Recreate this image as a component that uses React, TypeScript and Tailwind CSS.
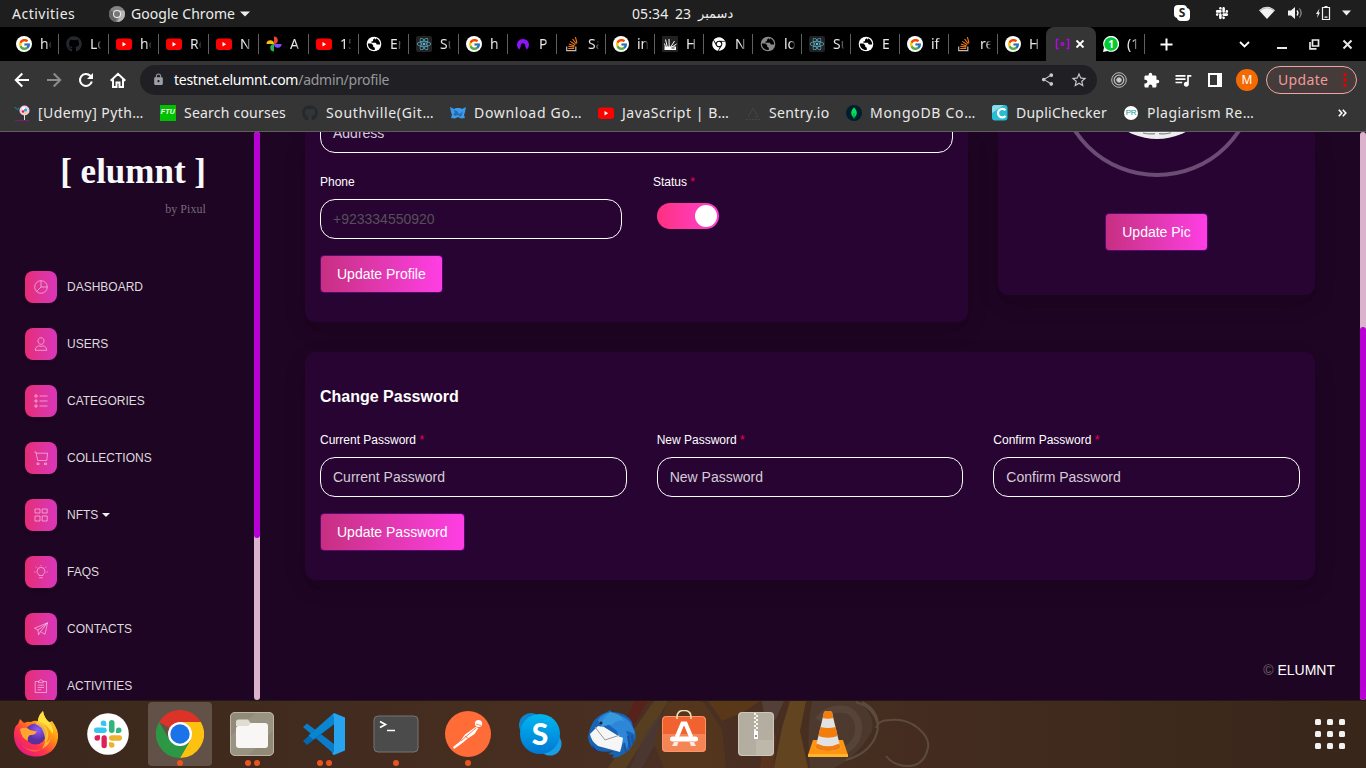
import React from "react";
import type { ReactNode } from "react";
import { FcGoogle } from "react-icons/fc";
import { FaGithub, FaReact, FaChrome, FaSlack } from "react-icons/fa";
import { MdLock, MdShare, MdStarBorder, MdExtension, MdQueueMusic } from "react-icons/md";

/* ---------- small favicons ---------- */

const Google = () => (
  <span className="flex size-4 items-center justify-center rounded-full bg-white"><FcGoogle size={13} /></span>
);
const Youtube = () => (
  <svg width="16" height="16" viewBox="0 0 16 16"><rect y="2.500" width="16" height="11.500" rx="3" fill="#f00" /><path d="M6.500 6v4.400L10.200 8.200z" fill="#fff" /></svg>
);
const Github = () => <FaGithub size={16} className="text-[#24292f]" />;
const Photos = () => (
  <svg width="16" height="16" viewBox="0 0 16 16">
    <path d="M8 .5a3.750 3.750 0 0 1 0 7.500z" fill="#ea4335" />
    <path d="M15.500 8a3.750 3.750 0 0 1-7.500 0z" fill="#7b4dff" />
    <path d="M8 15.500a3.750 3.750 0 0 1 0-7.500z" fill="#25b34b" />
    <path d="M.5 8A3.750 3.750 0 0 1 8 8z" fill="#fbbc04" />
  </svg>
);
const GlobeShape = ({ color }: { color: string }) => (
  <svg width="16" height="16" viewBox="0 0 16 16">
    <circle cx="8" cy="8" r="7.300" fill={color} />
    <path d="M1.800 7.500h3.700l1.700 1.700v1.600l1.600 1V14C5 14.300 2 12 1.800 7.500zM8.500 2.200 7 3.800v1.400H5.500v1.600h4.300l1 1.700h3.400Q14 4 10 2.200l-.3 1.500z" fill="#000" />
  </svg>
);
const Globe = () => <GlobeShape color="#fff" />;
const GlobeDim = () => <GlobeShape color="#8a8a8a" />;
const ReactFav = () => (
  <span className="flex size-4 items-center justify-center rounded-[2px] bg-[#222]"><FaReact size={14} className="text-[#61bedb]" /></span>
);
const Overflow = () => (
  <svg width="16" height="16" viewBox="0 0 16 16" fill="none">
    <path d="M2.700 10.500v4.200h9.100v-4.200" stroke="#bcbbbb" strokeWidth="1.200" />
    <path d="M4.200 12.500h6M4.300 10.300l6 .8M4.900 7.900l5.700 2M6.300 5.400l5 3.400M8.500 3l4 4.800M11.400 1.200l1.600 5.600" stroke="#f47a16" strokeWidth="1.100" />
  </svg>
);
const Arch = () => (
  <svg width="16" height="16" viewBox="0 0 16 16"><path d="M4.300 13.600A6 6 0 1 1 11.700 13.600L10.200 10.300a2.300 2.300 0 1 0-4.400 0z" fill="#9013fe" /></svg>
);
const Hand = () => (
  <svg width="16" height="16" viewBox="0 0 16 16" fill="none">
    <rect width="16" height="16" rx="1" fill="#222" />
    <path d="M2.500 10.500h11.500V14H2.500z" fill="#fff" /><path d="M3.500 11 2.500 7.500M5.300 11 3.500 3.500M7.200 11l-.2-8M8.700 11 12.500 5M10 11l4.500-3" stroke="#fff" strokeWidth="1" />
    <path d="M9.500 12h3" stroke="#222" />
  </svg>
);
const ChromeFav = () => <FaChrome size={14} className="text-white" />;

type Tab = { icon: () => React.JSX.Element; title: string };
const tabs: Tab[] = [
  { icon: Google, title: "ho" }, { icon: Github, title: "Lo" }, { icon: Youtube, title: "ho" },
  { icon: Youtube, title: "Re" }, { icon: Youtube, title: "N" }, { icon: Photos, title: "A" },
  { icon: Youtube, title: "15" }, { icon: Globe, title: "Er" }, { icon: ReactFav, title: "Su" },
  { icon: Google, title: "h" }, { icon: Arch, title: "P" }, { icon: Overflow, title: "Sa" },
  { icon: Google, title: "in" }, { icon: Hand, title: "H" }, { icon: ChromeFav, title: "N" },
  { icon: GlobeDim, title: "lo" }, { icon: ReactFav, title: "Su" }, { icon: Globe, title: "E" },
  { icon: Google, title: "if" }, { icon: Overflow, title: "re" }, { icon: Google, title: "H" },
];

function TabTitle({ children }: { children: ReactNode }) {
  return (
    <span className="w-[11px] overflow-hidden whitespace-nowrap text-[14px] leading-5 text-[#e8e8e8] [mask-image:linear-gradient(90deg,#000_55%,transparent_105%)]">
      {children}
    </span>
  );
}

function TopBar() {
  return (
    <div className="flex h-[27px] items-center bg-[#1e1e1e] text-[14px] text-[#ececec]">
      <span className="w-[109px] pl-3 tracking-[0.5px]">Activities</span>
      <svg width="16" height="16" viewBox="0 0 16 16" className="mr-1.5">
        <circle cx="8" cy="8" r="8" fill="#858585" /><path d="M8 8 1 4A8 8 0 0 0 7 16z" fill="#666" />
        <path d="M8 4.500h7.200A8 8 0 0 1 8 16l3-6z" fill="#b5b5b5" /><circle cx="8" cy="8" r="4" fill="#eee" /><circle cx="8" cy="8" r="3" fill="#777" />
      </svg>
      <span className="w-[109px] tracking-[0.05px]">Google Chrome</span>
      <svg width="10" height="6" viewBox="0 0 10 6"><path d="M0 .5h10L5 5.500z" fill="#eee" /></svg>
      <span className="ml-[382px] w-[43px] tracking-[0.1px]" dir="ltr">05:34</span>
      <span className="w-[22px]">23</span>
      <span className="w-[440px] pl-px font-['DejaVu_Sans',sans-serif] text-[13px]">دسمبر</span>
      <div className="flex flex-1 items-center">
        <svg width="16" height="16" viewBox="0 0 16 16" className="ml-[37px] -mt-px">
          <rect width="13" height="13" rx="4" fill="#fff" /><rect x="3" y="3" width="13" height="13" rx="4" fill="#fff" /><circle cx="8" cy="8" r="7" fill="#fff" />
          <text x="8" y="12.300" textAnchor="middle" fontSize="12" fontWeight="700" fill="#1e1e1e">S</text>
        </svg>
        <FaSlack size={14} className="ml-[25px] -mt-px text-white" />
        <svg width="16" height="14" viewBox="0 0 16 14" className="ml-[30px] -mt-px"><path d="M0 4.200Q8-2.600 16 4.200L8 13z" fill="#f2f2f2" /><path d="M1 4.600Q8-1 15 4.600" fill="none" stroke="#999" strokeWidth=".7" /></svg>
        <svg width="15" height="14" viewBox="0 0 15 14" className="ml-[13px] -mt-px" fill="none" stroke="#f2f2f2">
          <path d="M0 4.500h3L7 1v12L3 9.500H0z" fill="#f2f2f2" stroke="none" /><path d="M9 4.500q2 2.500 0 5" strokeWidth="1.300" /><path d="M11.500 2.500q3.300 4.500 0 9" stroke="#aaa" />
        </svg>
        <svg width="15" height="16" viewBox="0 0 15 16" className="ml-[13px] -mt-px" fill="none" stroke="#f2f2f2"><path d="M3.500 3.500 0 9h1.800L1 13l3-5.500H2.500z" fill="#f2f2f2" stroke="none" /><path d="M6.500 2.500h7v12h-7zM8.500 1.500h3M8.500 12.200h3" strokeWidth="1.200" /></svg>
        <svg width="10" height="6" viewBox="0 0 10 6" className="ml-[11px] -mt-px"><path d="M0 .5h9L4.500 5.500z" fill="#eee" /></svg>
      </div>
    </div>
  );
}

function TabStrip() {
  return (
    <div className="flex h-[34px] items-center bg-black pl-[9px]">
      {tabs.map((t, i) => (
        <div key={i} className={`relative flex h-full shrink-0 items-center pl-[7px] ${i < 9 ? "w-[50px]" : "w-[49px]"}`}>
          <span className="mr-2 flex size-4 items-center justify-center"><t.icon /></span>
          <TabTitle>{t.title}</TabTitle>
          {i < 20 && <span className="absolute right-0 top-[7px] h-5 w-px bg-[#5f6062]" />}
        </div>
      ))}
      <div className="-ml-px flex h-full w-[50px] items-center rounded-t-lg bg-[#353535] pl-[9px]">
        <svg width="15" height="12" viewBox="0 0 15 12" fill="none" stroke="#b108df" strokeWidth="1.500"><path d="M3.500 1.500H1.500v9h2M11.500 1.500h2v9h-2" /><circle cx="7.500" cy="6" r="1.300" /></svg>
        <svg width="10" height="10" viewBox="0 0 10 10" className="ml-[5px]" stroke="#fff" strokeWidth="1.800"><path d="m1.500 1.500 7 7M8.500 1.500l-7 7" /></svg>
      </div>
      <div className="flex h-full w-[49px] items-center pl-[7px]">
        <svg width="16" height="16" viewBox="0 0 16 16" className="mr-2"><path d="M0 16 1 11.500A8 8 0 1 1 4.500 15z" fill="#fff" /><circle cx="8" cy="8" r="6.800" fill="#0c3" /><text x="8" y="11.700" textAnchor="middle" fontSize="10" fontWeight="700" fill="#fff">1</text></svg>
        <TabTitle>(1</TabTitle>
        <span className="ml-[6px] h-5 w-px bg-[#5f6062]" />
      </div>
      <svg width="13" height="13" viewBox="0 0 13 13" className="ml-[15px]" stroke="#fff" strokeWidth="2"><path d="M6.500.5v12M.5 6.500h12" /></svg>
      <svg width="11" height="7" viewBox="0 0 11 7" className="ml-[66px]" fill="none" stroke="#fff" strokeWidth="1.800"><path d="m1 1 4.500 4.500L10 1" /></svg>
      <svg width="10" height="14" viewBox="0 0 10 14" className="ml-[27px]"><path d="M0 10h10v2H0z" fill="#e8e8e8" /></svg>
      <svg width="11" height="11" viewBox="0 0 11 11" className="ml-[22px]" fill="none" stroke="#e8e8e8" strokeWidth="1.700"><path d="M3.500 1h6v6h-6zM1 3v6.800h6.500" /></svg>
      <svg width="11" height="11" viewBox="0 0 11 11" className="ml-[22px]" stroke="#e8e8e8" strokeWidth="2"><path d="m1.500 1.500 8 8M9.500 1.500l-8 8" /></svg>
    </div>
  );
}

function Toolbar() {
  return (
    <div className="flex h-[38px] items-center bg-[#353535] pl-[14px] text-white">
      <svg width="16" height="16" viewBox="0 0 16 16" fill="none" stroke="#fff" strokeWidth="2"><path d="M15 8H2M8.300 1.500 1.800 8l6.500 6.500" /></svg>
      <svg width="16" height="16" viewBox="0 0 16 16" className="ml-4" fill="none" stroke="#8c8c8c" strokeWidth="2"><path d="M1 8h13M7.700 1.500 14.200 8l-6.500 6.500" /></svg>
      <svg width="16" height="16" viewBox="0 0 16 16" className="ml-4" fill="none"><path d="M13.800 9.500A6 6 0 1 1 12.300 3.800l1.200 1.200" stroke="#fff" strokeWidth="2.100" /><path d="M15 1v6H9z" fill="#fff" /></svg>
      <svg width="16" height="16" viewBox="0 0 16 16" className="ml-[16px] mr-[2px]" fill="none" stroke="#fff" strokeWidth="2"><path d="M.7 8.700 8 1.800l7.300 6.900M3 7.500V15h3.500v-4.500h3V15H13V7.500" /></svg>
      <div className="ml-[12px] flex h-[30px] w-[957px] items-center rounded-full bg-[#202024] pb-px pl-3 text-[14px]">
        <MdLock size={13} className="mr-[9px] text-[#9aa0a6]" />
        <span className="tracking-[-0.27px]">testnet.elumnt.com<span className="text-[#96989b]">/admin/profile</span></span>
        <MdShare size={15} className="ml-auto text-[#c8c8c8]" /><MdStarBorder size={18} className="ml-[15px] mr-[9px] text-[#c8c8c8]" />
      </div>
      <svg width="16" height="16" viewBox="0 0 16 16" className="ml-[14px]" fill="none" stroke="#bdbdbd"><circle cx="8" cy="8" r="7.300" /><circle cx="8" cy="8" r="4.800" strokeWidth="1.300" /><circle cx="8" cy="8" r="2.300" fill="#ccc" /></svg>
      <MdExtension size={17} className="ml-[16px]" />
      <MdQueueMusic size={20} className="ml-[13px]" />
      <svg width="14" height="14" viewBox="0 0 14 14" className="ml-[15px]"><path d="M0 0h14v14H0z" fill="#fff" /><path d="M2 2h7v10H2z" fill="#353535" /></svg>
      <span className="ml-[14px] flex size-[22px] items-center justify-center rounded-full bg-[#f56a00] text-[12px]">M</span>
      <div className="ml-2 flex h-7 w-[91px] items-center rounded-full border border-[#f0a6a0] bg-[#453b3b] pb-px pl-[11px] text-[14px] tracking-[0.35px] text-[#ee9d98]">
        Update
        <svg width="4" height="14" viewBox="0 0 4 14" className="ml-[15px] mt-px shrink-0" fill="#e60000"><circle cx="2" cy="2" r="1.700" /><circle cx="2" cy="7" r="1.700" /><circle cx="2" cy="12" r="1.700" /></svg>
      </div>
    </div>
  );
}

const Udemy = () => (
  <svg width="16" height="16" viewBox="0 0 16 16"><path d="M0 2h2l1 2 2-2v2.500L3 5z" fill="#15797f" /><circle cx="10.500" cy="5.500" r="5" fill="#f6c8ec" /><path d="M8 2h3v3H8z" fill="#fff" /><circle cx="11.500" cy="5" r="1.600" fill="#12b8c9" /><circle cx="9" cy="6.500" r="1.300" fill="#d7263d" /><circle cx="11.500" cy="8" r="1.100" fill="#f9d423" /><path d="M10 10h1v5h-1z" fill="#ddd" /><path d="M1 15h14v.8H1z" fill="#8b1a7d" /></svg>
);
const Ftu = () => <span className="flex size-4 items-center justify-center bg-[#00c000] font-['Liberation_Sans',sans-serif] text-[7px] font-bold italic text-white">FTU</span>;
const Fox = () => <svg width="16" height="16" viewBox="0 0 16 16"><path d="M0 2l4 2 2-1h4l2 1 4-2-1 5-1 3 1 3-4 .5L8 12l-3 1.500L1 13l1-3-1-3z" fill="#3a9bf0" /><path d="M4 5l3 1 2 3 2-1 2-2-2 6-3-2-3 1-2-2 2-1z" fill="#1b4a80" opacity=".6" /></svg>;
const Sentry = () => <svg width="16" height="16" viewBox="0 0 16 16" fill="none" stroke="#444"><path d="M5 9 8 3l5 9h-3M3 12l2.500-4" /><path d="M1 14.500h14" strokeDasharray="2 1" /></svg>;
const Mongo = () => <svg width="16" height="16" viewBox="0 0 16 16"><circle cx="8" cy="8" r="8" fill="#001e2b" /><path d="M8 2.500c3.700 3.500 3.700 7.500 0 10.500-3.700-3-3.700-7 0-10.500z" fill="#00e05a" /><path d="M8 8v6" stroke="#0a8f43" strokeWidth=".9" /></svg>;
const Dupli = () => <svg width="16" height="16" viewBox="0 0 16 16"><rect width="15.500" height="15.500" rx="3" fill="#29bcd6" /><path d="M0 8V3a3 3 0 0 1 3-3h9z" fill="#85dcea" /><path d="M13.500 5.200A4.300 4.300 0 1 0 13.500 11" fill="none" stroke="#fff" strokeWidth="2.200" /></svg>;
const Plag = () => <span className="flex size-[14px] items-center justify-center rounded-full bg-white font-['Liberation_Sans',sans-serif] text-[8px] tracking-[-0.3px] text-[#159a8e]">PR</span>;

const bookmarks: { icon: () => React.JSX.Element; label: string; cls: string }[] = [
  { icon: Udemy, label: "[Udemy] Pyth…", cls: "w-[146px] tracking-[0.43px]" },
  { icon: Ftu, label: "Search courses", cls: "w-[142px] tracking-[0.22px]" },
  { icon: Github, label: "Southville(Git…", cls: "w-[148px] tracking-[0.65px]" },
  { icon: Fox, label: "Download Go…", cls: "w-[148px] tracking-[0.7px]" },
  { icon: Youtube, label: "JavaScript | B…", cls: "w-[147px] tracking-[0.55px]" },
  { icon: Sentry, label: "Sentry.io", cls: "w-[101px] tracking-[0.35px]" },
  { icon: Mongo, label: "MongoDB Co…", cls: "w-[146px] tracking-[0.7px]" },
  { icon: Dupli, label: "DupliChecker", cls: "w-[131px] tracking-[0.25px]" },
  { icon: Plag, label: "Plagiarism Re…", cls: "w-[215px] tracking-[0.48px]" },
];

function Bookmarks() {
  return (
    <div className="flex h-[33px] items-center border-b border-[#5e5e5e] bg-[#353535] pb-[5px] pl-[14px] text-[14px] text-[#e9e9e9]">
      {bookmarks.map((b) => (
        <div key={b.label} className={`flex shrink-0 items-center gap-2 whitespace-nowrap ${b.cls}`}>
          <span className="flex size-4 shrink-0 items-center justify-center">
            <b.icon />
          </span>
          <span className="-mt-px">{b.label}</span>
        </div>
      ))}
      <svg width="9" height="8" viewBox="0 0 9 8" fill="none" stroke="#fff" strokeWidth="1.600"><path d="m.8.8 3 3.200-3 3.200M4.800.8l3 3.200-3 3.200" /></svg>
    </div>
  );
}

/* ---------- page ---------- */

const menu: { label: string; path: string; caret?: boolean }[] = [
  { label: "DASHBOARD", path: "M7 .7a6.300 6.300 0 1 0 0 12.600A6.300 6.300 0 0 0 7 .7zM7 .7V7h6.300M7 7l-4.500 4.500" },
  { label: "USERS", path: "M7 .7c-4 0-4 6.600 0 6.600s4-6.600 0-6.600zM1.300 13.300c0-2.500 1.500-4 3.500-4.500L7 9.500l2.200-.7c2 .5 3.500 2 3.500 4.500z" },
  { label: "CATEGORIES", path: "M1 1h2v2H1zM1 6h2v2H1zM1 11h2v2H1zM5.500 2h8M5.500 7h8M5.500 12h8" },
  { label: "COLLECTIONS", path: "M.3 1h1.700l1.700 8.500h9l1-7.300H2.300M3 12h2v1.700H3zM10.500 12h2v1.700h-2z" },
  { label: "NFTS", path: "M1 1h5v4H1zM8.200 1h5v4h-5zM1 8h5v5H1zM8.200 8h5v5h-5z", caret: true },
  { label: "FAQS", path: "M5 10.500c0-1.500-2-2-2-4.200a4 4 0 0 1 8 0c0 2.200-2 2.700-2 4.200zM5.200 12.800h3.600M7 1V0M2.600 2.600l-.9-.9M11.400 2.600l.9-.9M.2 7h1.200M12.600 7h1.200" },
  { label: "CONTACTS", path: "M13.500.8.500 6.200l3.500 1.800.5 4.800 2-3.200 4.500 2.700zM4 8l9.500-7.200L6.500 9.600" },
  { label: "ACTIVITIES", path: "M4.500 2.500H1.200v11h11.300v-11H9.200M4.500 3.700V2L5.800 1.700c.5-1.500 1.700-1.500 2.200 0L9.200 2v1.700zM3.700 6.200H10M3.700 8.500H10M3.700 10.800h3.500" },
];

function Sidebar() {
  return (
    <aside className="flex h-full w-[254px] shrink-0 flex-col overflow-hidden">
      <div className="flex h-[139px] w-[206px] shrink-0 flex-col items-end pt-[19px] font-['Liberation_Serif',serif]">
        <span className="whitespace-pre text-[35px] font-bold leading-[42px] text-[#f8f9fa]">[ elumnt ]</span>
        <span className="mt-[7px] text-[12px] leading-[18px] tracking-[0.06px] text-[#77697a]">by Pixul</span>
      </div>
      <nav className="flex flex-col gap-[25px] pl-[25px]">
        {menu.map((m) => (
          <div key={m.label} className="flex h-8 shrink-0 items-center gap-[10px] text-[12px] text-[#dedade]">
            <span className="flex size-8 items-center justify-center rounded-lg bg-linear-to-r from-[#e62b76] to-[#da35ba] shadow-[0_2px_4px_rgba(0,0,0,0.15)]">
              <svg width="14" height="14" viewBox="0 0 14 14" fill="none" stroke="#fff" strokeOpacity=".55" strokeWidth=".9"><path d={m.path} /></svg>
            </span>
            <span className="flex items-center gap-1">{m.label}
              {m.caret && <svg width="8" height="4" viewBox="0 0 8 4"><path d="M0 0h8L4 4z" fill="#eee" /></svg>}
            </span>
          </div>
        ))}
      </nav>
    </aside>
  );
}

function Label({ children, required }: { children: ReactNode; required?: boolean }) {
  return <div className="text-[12px] leading-[18px] text-white">{children}{required && <span className="text-[#f5004f]"> *</span>}</div>;
}

function Input({ children, dim }: { children: ReactNode; dim?: boolean }) {
  return (
    <div className={`flex h-10 items-center rounded-[15px] border border-white px-3 text-[14px] ${dim ? "text-[#56505a]" : "text-[#d4ccd6]"}`}>{children}</div>
  );
}

function Button({ children }: { children: ReactNode }) {
  return (
    <button className="h-[38px] w-fit rounded-[4px] border border-[#560a70] bg-linear-to-r from-[#c62f80] to-[#ff3ee5] bg-origin-border px-4 text-[14px] text-white">{children}</button>
  );
}

const cardShadow = "shadow-[0_8px_26px_-4px_rgba(20,20,20,0.15),0_8px_9px_-5px_rgba(20,20,20,0.06)]";

function Content() {
  return (
    <main className="flex min-w-0 flex-1 flex-col pl-[45px] pr-[45px]">
      <div className="flex items-start justify-between">
        <section className={`h-[190px] w-[663px] overflow-hidden rounded-b-[10px] bg-[#280432] px-[15px] ${cardShadow}`}>
          <div className="-mt-[19px]"><Input>Address</Input></div>
          <div className="mt-5 flex gap-[31px]">
            <div className="w-[302px]"><Label>Phone</Label><div className="mt-2"><Input dim>+923334550920</Input></div></div>
            <div>
              <Label required>Status</Label>
              <div className="ml-1 mt-3 flex h-[26px] w-[62px] items-center justify-end rounded-full bg-linear-to-r from-[#ff2f80] to-[#ff3ed0] pr-0.5"><span className="size-[22px] rounded-full bg-white" /></div>
            </div>
          </div>
          <div className="mt-4"><Button>Update Profile</Button></div>
        </section>
        <section className={`flex h-[163px] w-[317px] flex-col items-center overflow-hidden rounded-b-[10px] bg-[#280432] ${cardShadow}`}>
          <div className="-mt-[155px] flex size-[200px] shrink-0 items-center justify-center rounded-full border-4 border-[#6b4c75]">
            <svg width="124" height="124" viewBox="0 0 124 124"><circle cx="62" cy="62" r="62" fill="#eee" /><path d="M48 118q7 1.500 12 .6M64 118.600q7 .9 12-.8" fill="none" stroke="#8a8290" strokeWidth="1.200" /></svg>
          </div>
          <div className="mt-9"><Button>Update Pic</Button></div>
        </section>
      </div>
      <section className={`mt-[30px] h-[228px] rounded-[10px] bg-[#280432] px-[15px] pt-[33px] ${cardShadow}`}>
        <h2 className="text-[16px] font-bold leading-6 text-white">Change Password</h2>
        <div className="mt-[22px] grid grid-cols-3 gap-[30px]">
          {["Current Password", "New Password", "Confirm Password"].map((f) => (
            <div key={f}><Label required>{f}</Label><div className="mt-2"><Input>{f}</Input></div></div>
          ))}
        </div>
        <div className="mt-4"><Button>Update Password</Button></div>
      </section>
      <footer className="-mr-5 mt-[80px] text-right text-[14px] leading-5 text-white"><span className="text-[#6c676e]">©</span> ELUMNT</footer>
    </main>
  );
}

/* ---------- dock ---------- */

const Firefox = () => (
  <svg width="48" height="48" viewBox="0 0 48 48">
    <defs>
      <linearGradient id="ff" x1="1" y1="0" x2=".2" y2="1"><stop stopColor="#fff44f" /><stop offset=".4" stopColor="#ff980e" /><stop offset=".7" stopColor="#ff3647" /><stop offset="1" stopColor="#e31587" /></linearGradient>
      <radialGradient id="ffb" cx=".6" cy=".3"><stop stopColor="#9059ff" /><stop offset="1" stopColor="#5b2f9e" /></radialGradient>
    </defs>
    <path d="M2 25C2 18 4 15 6 14l2-5 4 4q4-2 7-1 3-2 7-1 0-5 5-10 1 7 6 11 2 0 3-1 7 9 6 17C45 39 36 46.500 24 46.500S2 38 2 25z" fill="url(#ff)" />
    <circle cx="23.500" cy="24" r="10.500" fill="url(#ffb)" />
    <path d="M8 19q6-3 10 1l7 1.500q-2 4-7 3.500-3 2-2 6-7-3-8-12z" fill="#ffa530" />
    <path d="M26 11q5 1 9 8 3 8-1 14 6-4 6-12-1 14-10 18 5-7 2-15-2-8-9-10z" fill="#ffd23a" opacity=".75" />
    <path d="M26 11q0-5 5-10 1 7 6 11 5 6 4 12-6-10-15-13z" fill="#ffe040" />
    <path d="M6 31q9 12 24 8-11 8-24-8z" fill="#ff6c36" opacity=".8" />
  </svg>
);
const Slack = () => (
  <svg width="44" height="44" viewBox="0 0 44 44">
    <circle cx="22" cy="22" r="20.800" fill="#fff" />
    <g fill="#36c5f0"><path d="M17.500 8.500a2.750 2.750 0 0 1 2.750 2.750V14H17.500a2.750 2.750 0 0 1 0-5.500z" /><rect x="8" y="15.500" width="12.700" height="5.500" rx="2.750" /></g>
    <g fill="#2eb67d"><rect x="23" y="8" width="5.500" height="13" rx="2.750" /><path d="M30 21v-2.750A2.750 2.750 0 1 1 32.750 21z" /></g>
    <g fill="#ecb22e"><rect x="23" y="23.200" width="13" height="5.500" rx="2.750" /><path d="M23 30.200h2.750A2.750 2.750 0 1 1 23 33z" /></g>
    <g fill="#e01e5a"><path d="M14 23.200V26a2.750 2.750 0 1 1-2.750-2.750z" /><rect x="15.500" y="23.200" width="5.300" height="13" rx="2.650" /></g>
  </svg>
);
const Chrome = () => (
  <svg width="48" height="48" viewBox="0 0 48 48">
    <path d="M24 24 3.200 12A24 24 0 0 1 44.800 12z" fill="#db3327" /><path d="M24 12h20.800A24 24 0 0 1 24 48l10.400-18z" fill="#fcc20f" />
    <path d="M13.600 30 3.200 12A24 24 0 0 0 24 48l10.400-18z" fill="#2c9845" /><circle cx="24" cy="24" r="12" fill="#fff" /><circle cx="24" cy="24" r="9.700" fill="#1a73e8" />
  </svg>
);
const Files = () => (
  <svg width="48" height="48" viewBox="0 0 48 48"><rect x="2" y="2" width="44" height="44" rx="5" fill="#918a79" /><path d="M2.500 26 28 2.500h13a4.500 4.500 0 0 1 4.500 4.500v13L20 45.500H7A4.500 4.500 0 0 1 2.500 41z" fill="#a29b89" opacity=".5" /><rect x="2.500" y="2.500" width="43" height="43" rx="4.500" fill="none" stroke="#bcb5a5" /><path d="M8 16v-4a2.500 2.500 0 0 1 2.500-2.500H20l3 4h5v5z" fill="#e0ddd3" /><path d="M8 18.500a2.500 2.500 0 0 1 2.500-2.500H20l3-3h14a3 3 0 0 1 3 3v19a3 3 0 0 1-3 3H11a3 3 0 0 1-3-3z" fill="#f8f7f6" /></svg>
);
const Code = () => (
  <svg width="48" height="48" viewBox="0 0 48 48"><path d="m3 17 4-3.500L34 34v10z" fill="#0a7cc8" /><path d="m3 31 4 4 27-20.500V3z" fill="#0067b0" /><path d="M34 3v11L13.500 29.600l-5-4z" fill="#0a86d0" /><path d="M34 3 45 7.500v33L34 45l-2-1.300 2-2.500V6.500l-1-1z" fill="#26a4ee" /></svg>
);
const Terminal = () => (
  <svg width="48" height="48" viewBox="0 0 48 48"><rect x="2" y="6" width="44" height="36" rx="4" fill="#4b4b4b" stroke="#747474" /><path d="m8 11.500 5.500 3L8 17.500M15 20.500h8" fill="none" stroke="#fff" strokeWidth="1.700" /></svg>
);
const Postman = () => (
  <svg width="48" height="48" viewBox="0 0 48 48"><circle cx="24" cy="24" r="23" fill="#ff6c37" /><circle cx="34.500" cy="13.500" r="3.600" fill="#fff" /><path d="m31.500 17-10.500 7.500-5 7L9 37l1 2 8.500-6 4-3.500 8-5.500 4-6z" fill="#fff" /><path d="m17 31 15-13M21 26l4 3" stroke="#ff6c37" strokeWidth=".9" /><path d="m32 14 5 1.500" stroke="#ff6c37" strokeWidth=".8" /></svg>
);
const Skype = () => (
  <svg width="48" height="48" viewBox="0 0 48 48"><defs><linearGradient id="sk" x1="0" y1="0" x2="0" y2="1"><stop stopColor="#00b7f0" /><stop offset="1" stopColor="#0078d4" /></linearGradient></defs><circle cx="15" cy="15" r="12" fill="#0f84c9" /><circle cx="34" cy="34" r="11.500" fill="#199ee5" /><circle cx="24" cy="24" r="20" fill="url(#sk)" /><text x="24" y="34.500" textAnchor="middle" fontFamily="Lato" fontWeight="900" fontSize="30" fill="#fff">S</text></svg>
);
const Thunderbird = () => (
  <svg width="48" height="48" viewBox="0 0 48 48">
    <path d="M5 12Q10 5 19 2l3-2 2 2q14 0 20 10l1 5 2 3 1 8-3 6q-3 8-15 13l-6 1 2-3-6-1 5-3Q2 45 0 27q1-8 5-15z" fill="#1764b5" />
    <path d="M10 10q9-12 20-5Q44 8 47 25q-5-4-9-4 4 8 1 18-9-8-10-18l-8-6-8 1z" fill="#2d86d8" />
    <path d="M22 2q11 1 14 9-7-2-12 4-6-1-11 4 0-10 9-17z" fill="#3a9fe0" opacity=".7" />
    <path d="M2 24 10 16l6 1 16 10q2 0 3 1-1 8-3 14L10 36q-7-5-8-12z" fill="#f6f6f6" /><path d="m7 17 10 13 15-5" fill="none" stroke="#999" /><path d="m4 35 7 8-5-3z" fill="#2b2a74" /><circle cx="13" cy="13" r="1.500" fill="#222" />
    <path d="m40 26 2 12M44 25l1 9M36 33l2 9" fill="none" stroke="#1b52a4" strokeWidth="2" />
  </svg>
);
const Software = () => (
  <svg width="48" height="48" viewBox="0 0 48 48"><rect x="2" y="6" width="44" height="36" rx="4" fill="#f0622f" /><path d="M2 24h44v14a4 4 0 0 1-4 4H6a4 4 0 0 1-4-4z" fill="#f58457" /><rect x="2.500" y="6.500" width="43" height="35" rx="4" fill="none" stroke="#ff9468" /><path d="M17 9V7q0-6.500 7-6.500T31 7v2" fill="none" stroke="#f2dfae" strokeWidth="1.600" /><path d="m16.800 27 5.700-13.500h3L31.200 27" fill="none" stroke="#fff" strokeWidth="4.200" /><path d="m12 36 2-4h4.500l-1.500 4zM31 36l-1.500-4H34l2 4z" fill="#fbe9e0" /><rect x="10" y="26.500" width="28" height="5" rx="2.500" fill="#fff" /></svg>
);
const Archive = () => (
  <svg width="48" height="48" viewBox="0 0 48 48"><rect x="6" y="2" width="36" height="44" rx="4" fill="#b3ae9f" /><path d="M24 30h17.500v11.500A4 4 0 0 1 38 45H24z" fill="#bdb8aa" /><rect x="6.500" y="2.500" width="35" height="43" rx="4" fill="none" stroke="#ccc8bd" /><path d="M23 3v19" stroke="#f6f4ef" strokeWidth="2" strokeDasharray="2 2" /><path d="M25 5v17" stroke="#f6f4ef" strokeWidth="2" strokeDasharray="2 2" /><path d="M22 21h4v8h-4z" fill="#fff" /><path d="M23.200 25h1.600v2h-1.600z" fill="#777" /></svg>
);
const Vlc = () => (
  <svg width="48" height="48" viewBox="0 0 48 48">
    <path d="M9 30h30l5 15H4z" fill="#ff9410" /><path d="M4 44h40v3H4z" fill="#ffb52b" />
    <path d="M22 1h4q1.500 0 2 1.500L36.500 38q-3 3-12.500 3t-12.500-3L20 2.500Q20.500 1 22 1z" fill="#e2e2e2" />
    <path d="M22 1h4q1.500 0 2 1.500L29.500 8q-5.500 1.500-11 0L20 2.500Q20.500 1 22 1zM16.500 17q7.500 2 15 0l2.200 9q-9.700 3.500-19.400 0zM12.600 33.500q11.400 5.500 22.800 0L36.500 38q-3 3-12.500 3t-12.500-3z" fill="#f27d0c" />
  </svg>
);

const dock: { icon: () => React.JSX.Element; dots: number; active?: boolean }[] = [
  { icon: Firefox, dots: 0 }, { icon: Slack, dots: 0 }, { icon: Chrome, dots: 1, active: true }, { icon: Files, dots: 2 },
  { icon: Code, dots: 2 }, { icon: Terminal, dots: 1 }, { icon: Postman, dots: 1 }, { icon: Skype, dots: 0 },
  { icon: Thunderbird, dots: 0 }, { icon: Software, dots: 0 }, { icon: Archive, dots: 0 }, { icon: Vlc, dots: 0 },
];

function Dock() {
  return (
    <div className="relative flex h-[68px] items-start border-t border-[#241812] bg-linear-to-r from-[#3b271c] via-[#4a3022] to-[#38261a] pt-px">
      <svg width="360" height="67" viewBox="590 701 360 67" className="absolute left-[590px] top-0" fill="none">
        <path d="M634 701h14l-10 17-8 12-16 12 10-18z" fill="#5c1e1c" opacity=".8" />
        <path d="M654 701h14l-14 24-16 24-12 19h-18l20-30z" fill="#5c4420" opacity=".75" />
        <path d="M646 732l16-20-6 30-14 26h-12z" fill="#4c3a38" opacity=".7" />
        <path d="M666 703q24-8 38 0l18 26 4 39h-62l-10-24z" fill="#5a3b1b" opacity=".6" />
        <path d="M708 701h52l-18 12-20 8z" fill="#593719" />
        <path d="M762 701h22l-8 18-10 10z" fill="#543f38" />
        <path d="M766 718l10 18-2 32h-14z" fill="#623420" opacity=".7" />
        <path d="M790 701h16l-6 30 8 37h-34l8-40z" fill="#654820" opacity=".9" />
        <path d="M812 701h44q20 12 16 30-14 26-38 37h-24q-4-34 2-67z" fill="#53443a" opacity=".5" />
        <path d="M818 720q10-14 30-10 16 10 8 30-8 12-22 14" stroke="#5f5044" strokeWidth="7" opacity=".5" />
        <path d="M856 702q20 6 22 26-4 24-32 32M862 702q16 8 16 24M876 728q2-8 14-8 16-2 28 8 12 10 10 20-4 18-20 18-14 0-22-10" stroke="#65574a" strokeWidth="2" opacity=".7" />
      </svg>
      {dock.map((d, i) => (
        <div key={i} className="relative flex w-[72px] justify-center">
          <div className={`relative flex h-16 w-16 items-center justify-center rounded ${d.active ? "bg-[#625146]" : ""}`}>
            <d.icon />
            <div className="absolute inset-x-0 bottom-0 flex h-[6px] justify-center gap-[3px]">
              {Array.from({ length: d.dots }, (_, k) => <span key={k} className="size-[6px] rounded-full bg-[#e95420]" />)}
            </div>
          </div>
        </div>
      ))}
      <div className="ml-auto mr-[21px] mt-[17px] grid grid-cols-3 gap-[6px]">
        {Array.from({ length: 9 }, (_, k) => <span key={k} className="size-[6px] rounded-[1.5px] bg-[#f2f2f2]" />)}
      </div>
    </div>
  );
}

export default function App() {
  return (
    <div className="flex h-[768px] w-[1366px] flex-col overflow-hidden bg-[#1e0523] font-['Noto_Sans',sans-serif]">
      <TopBar />
      <TabStrip />
      <Toolbar />
      <Bookmarks />
      <div className="flex h-[568px] shrink-0 overflow-hidden bg-[#1e0523] font-['Liberation_Sans',Arial,sans-serif]">
        <Sidebar />
        <div className="h-full w-[6px] shrink-0 rounded-full bg-[#dcb3cc]"><div className="h-[406px] rounded-full bg-[#b800d4]" /></div>
        <Content />
        <div className="h-full w-[6px] shrink-0 rounded-full bg-[#dcb3cc] pt-[195px]"><div className="h-[373px] rounded-full bg-[#b800d4]" /></div>
      </div>
      <Dock />
    </div>
  );
}
